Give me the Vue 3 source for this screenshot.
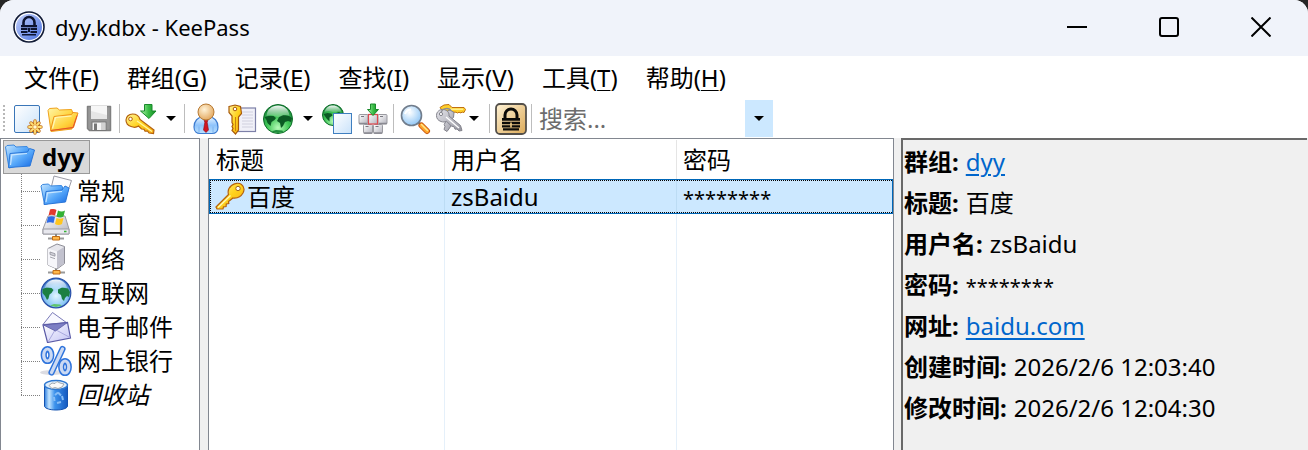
<template>
    <div class="window">
        <svg class="sprites" aria-hidden="true">
            <defs>
                <linearGradient id="g-folder" x1="0" y1="0" x2="1" y2="1">
                    <stop offset="0" stop-color="#c6e6ff" />
                    <stop offset="0.5" stop-color="#58a9fa" />
                    <stop offset="1" stop-color="#1266e2" />
                </linearGradient>
                <linearGradient id="g-gold" x1="0" y1="0" x2="1" y2="1">
                    <stop offset="0" stop-color="#fff39a" />
                    <stop offset="0.5" stop-color="#ffd21c" />
                    <stop offset="1" stop-color="#f7a812" />
                </linearGradient>
                <linearGradient id="g-open" x1="0" y1="0" x2="1" y2="1">
                    <stop offset="0" stop-color="#fff6a8" />
                    <stop offset="0.6" stop-color="#ffd23a" />
                    <stop offset="1" stop-color="#ff9a1c" />
                </linearGradient>
                <linearGradient id="g-paper" x1="0" y1="0" x2="1" y2="1">
                    <stop offset="0" stop-color="#ffffff" />
                    <stop offset="1" stop-color="#c9e2fa" />
                </linearGradient>
                <linearGradient id="g-gray" x1="0" y1="0" x2="1" y2="1">
                    <stop offset="0" stop-color="#ffffff" />
                    <stop offset="1" stop-color="#b3b3bd" />
                </linearGradient>
                <linearGradient id="g-steel" x1="0" y1="0" x2="1" y2="1">
                    <stop offset="0" stop-color="#e4e4ea" />
                    <stop offset="1" stop-color="#94949e" />
                </linearGradient>
                <linearGradient id="g-arrow" x1="0" y1="0" x2="1" y2="0">
                    <stop offset="0" stop-color="#b5f5b0" />
                    <stop offset="0.5" stop-color="#3cbf48" />
                    <stop offset="1" stop-color="#128a22" />
                </linearGradient>
                <radialGradient id="g-green" cx="0.5" cy="0.8" r="0.75">
                    <stop offset="0" stop-color="#b6fbb8" />
                    <stop offset="0.5" stop-color="#3fc656" />
                    <stop offset="1" stop-color="#128436" />
                </radialGradient>
                <radialGradient id="g-ocean" cx="0.5" cy="0.6" r="0.6">
                    <stop offset="0" stop-color="#e2f6ff" />
                    <stop offset="0.6" stop-color="#8cc8f5" />
                    <stop offset="1" stop-color="#3a72c4" />
                </radialGradient>
                <linearGradient id="g-shine" x1="0" y1="0" x2="0" y2="1">
                    <stop offset="0" stop-color="#ffffff" stop-opacity="0.95" />
                    <stop offset="1" stop-color="#ffffff" stop-opacity="0.15" />
                </linearGradient>
                <radialGradient id="g-skin" cx="0.4" cy="0.35" r="0.7">
                    <stop offset="0" stop-color="#fff3d8" />
                    <stop offset="1" stop-color="#e2a55a" />
                </radialGradient>
                <linearGradient id="g-shirt" x1="0" y1="0" x2="0" y2="1">
                    <stop offset="0" stop-color="#e6f3ff" />
                    <stop offset="0.5" stop-color="#8fc3fb" />
                    <stop offset="1" stop-color="#b9e0ff" />
                </linearGradient>
                <radialGradient id="g-lens" cx="0.4" cy="0.35" r="0.7">
                    <stop offset="0" stop-color="#ffffff" />
                    <stop offset="1" stop-color="#8cc4f5" />
                </radialGradient>
                <linearGradient id="g-tan" x1="0" y1="0" x2="1" y2="1">
                    <stop offset="0" stop-color="#fff3d6" />
                    <stop offset="1" stop-color="#dcaa58" />
                </linearGradient>
                <linearGradient id="g-logo" x1="0" y1="0" x2="1" y2="1">
                    <stop offset="0" stop-color="#c3d0fb" />
                    <stop offset="1" stop-color="#4a72e0" />
                </linearGradient>
                <linearGradient id="g-bin" x1="0" y1="0" x2="1" y2="0">
                    <stop offset="0" stop-color="#2d7ede" />
                    <stop offset="0.2" stop-color="#c4e5ff" />
                    <stop offset="0.45" stop-color="#3c92ec" />
                    <stop offset="1" stop-color="#1459c0" />
                </linearGradient>
                <linearGradient id="g-mail" x1="0" y1="0" x2="1" y2="1">
                    <stop offset="0" stop-color="#ffffff" />
                    <stop offset="1" stop-color="#c3c3f5" />
                </linearGradient>
            </defs>

            <symbol id="i-logo" viewBox="0 0 32 32">
                <circle cx="16" cy="16" r="15" fill="#fff" stroke="#111a35" stroke-width="1.6" />
                <circle cx="16" cy="16" r="13" fill="url(#g-logo)" />
                <path d="M10.5 14v-2.500a5.500 5.500 0 0 1 11 0V14" fill="none" stroke="#0d1430" stroke-width="2.600" />
                <path d="M8 14h16v2.200H8zM8 17h6.500v2H8zM17.500 17H24v2h-6.500zM8 20h6.500v2H8zM17.500 20H24v2h-6.500zM9 23h14v1.500H9z" fill="#0d1430" />
                <path d="M15 17h2v4h-2z" fill="#0d1430" />
            </symbol>
            <symbol id="i-new" viewBox="0 0 32 32">
                <rect x="3.500" y="2.500" width="25" height="27" rx="1.500" fill="url(#g-paper)" stroke="#3a76b8" />
                <g stroke="#c26d14" stroke-width="3.400" stroke-linecap="round">
                    <path d="M24 18v12M18 24h12M20 20l8 8M28 20l-8 8" />
                </g>
                <g stroke="#ffe27a" stroke-width="1.800" stroke-linecap="round">
                    <path d="M24 18v12M18 24h12M20 20l8 8M28 20l-8 8" />
                </g>
                <circle cx="24" cy="24" r="2.200" fill="#fff8cf" stroke="#d98a26" stroke-width="0.800" />
            </symbol>
            <symbol id="i-open" viewBox="0 0 32 32">
                <path d="M1 7.500l1.500-2 7.500-.5 2.500 2 12-.5 1 2.500-.5 17-21 2.500z" fill="url(#g-open)" stroke="#f0a21c" />
                <path d="M3.500 27.500L7 13.500l17.500-2 1.500-2 5 .5-4.500 14.500z" fill="url(#g-open)" stroke="#f0941a" />
                <path d="M5.500 25.500l3-11 16-1.500" fill="none" stroke="#fff6b8" stroke-width="1.200" />
                <path d="M4 27.500l22-3 4-12" fill="none" stroke="#e4512a" stroke-width="1" />
            </symbol>
            <symbol id="i-save" viewBox="0 0 32 32">
                <path d="M4.500 3.500h23v24H6.500l-2-2z" fill="#969696" stroke="#808080" stroke-width="1.500" stroke-linejoin="round" />
                <rect x="8" y="3" width="16" height="13" fill="#e6e6e6" />
                <path d="M8 8l16 4V3H8z" fill="#f6f6f6" />
                <rect x="9" y="19" width="14" height="8.500" fill="#f5f5f5" stroke="#777" />
                <rect x="11" y="20.500" width="3" height="7" fill="#777" />
                <rect x="18" y="20" width="4" height="7" fill="#d2d2d2" />
            </symbol>
            <symbol id="i-key-add" viewBox="0 0 32 32">
                <path d="M1 17c0-3.500 3-6 6.500-6 4 0 6.500 2 7.500 5.500l14 10.500-.5 3.500-4.500-.5-1.500-2-2.500.2-1-2-2.500-.2-3-3c-2 1.500-5 1.500-7.500.5C3 22.500 1 20 1 17z" fill="url(#g-gold)" stroke="#b5620e" stroke-width="1.200" />
                <circle cx="5.500" cy="16" r="1.800" fill="#fff" stroke="#b5620e" />
                <path d="M12 18l15 10.500" stroke="#fff6a0" stroke-width="1.400" />
                <path d="M19.500 1.500h7.500v6.500h4L24 15.500 15.500 8h4z" fill="url(#g-arrow)" stroke="#1a8a2c" />
            </symbol>
            <symbol id="i-user" viewBox="0 0 32 32">
                <path d="M4 24c0-6 4-10 8.500-10h7c4.500 0 8.500 4 8.500 10 0 5-3 6.500-6 6.500H10c-3 0-6-1.500-6-6.500z" fill="url(#g-shirt)" stroke="#3c7bd0" stroke-width="1.200" />
                <path d="M9 29.500v-6M23 29.500v-6" stroke="#7db2ee" stroke-width="1" />
                <path d="M11 15l5 4.500 5-4.500" fill="#fff" stroke="#a9c8ee" />
                <path d="M14 16.500h4l-.8 3 1.300 7.500-2.500 2.500-2.500-2.500 1.300-7.500z" fill="#d21420" stroke="#8a0b12" stroke-width="0.600" />
                <circle cx="16" cy="9" r="8" fill="url(#g-skin)" stroke="#b77932" />
            </symbol>
            <symbol id="i-key-note" viewBox="0 0 32 32">
                <rect x="11.500" y="5" width="18" height="23.500" fill="#f0f0f8" stroke="#7d80a8" stroke-width="1.200" />
                <path d="M16 9h11M16 12h11M16 15h11M16 18h11M16 21h11M16 24h11" stroke="#d0d0de" />
                <path d="M3 3.500l6-1.500 5.500 1.500 1 7-3 3.500v13l-3 4-3.500-3.500 1-2-1-2 1-2-1-2V13L3 9.500z" fill="url(#g-gold)" stroke="#a85a0a" stroke-width="1.200" />
                <path d="M9.500 14v14" stroke="#c9820c" stroke-width="1" />
                <circle cx="9" cy="6" r="1.800" fill="#fff" stroke="#a85a0a" />
            </symbol>
            <symbol id="i-globe-green" viewBox="0 0 32 32">
                <circle cx="16" cy="16" r="14.500" fill="url(#g-green)" stroke="#0d6b28" />
                <path d="M2.500 14l4-1 5 0 2.500 2-1.500 2-3 2-1 4-3-3-1-3zM17 14l4-2 6 1 3 2-1 4-3-1-3 1-2 4-2 2-1-5-3-2z" fill="#0b5a24" />
                <path d="M9 28.500l5-1.500 6 .5 2 1-6 1.500z" fill="#1f8c3c" />
                <path d="M4.500 13C5 6 10 2.500 16 2.500S27 6 27.500 13c-6-3-9 2-12 1s-6-3-11-1z" fill="url(#g-shine)" />
            </symbol>
            <symbol id="i-globe-page" viewBox="0 0 32 32">
                <circle cx="12" cy="12" r="10.500" fill="url(#g-green)" stroke="#0d6b28" />
                <path d="M2.500 11l4-1 4 .5 1 2-3 2v4l-3-3zM13 11l5-2 4 3v5l-5 4-2-4z" fill="#0b5a24" />
                <path d="M3.500 9C5 4 8 2.500 12 2.500S19.500 5 20.500 9c-5-1-6 1-9 0s-5-1-8 0z" fill="url(#g-shine)" />
                <rect x="12.500" y="10.500" width="18" height="20" fill="url(#g-paper)" stroke="#3f7fc0" />
            </symbol>
            <symbol id="i-keyboard" viewBox="0 0 32 32">
                <g fill="url(#g-gray)" stroke="#9a9aa0">
                    <rect x="2" y="11.500" width="9" height="9.500" rx="1" />
                    <rect x="21" y="11.500" width="9" height="9.500" rx="1" />
                    <rect x="6.500" y="21.500" width="9" height="9" rx="1" />
                    <rect x="16.500" y="21.500" width="9" height="9" rx="1" />
                    <rect x="11.500" y="11.500" width="9" height="9.500" stroke="#e0484e" stroke-width="1.200" />
                </g>
                <path d="M4 13.500h3M23 13.500h3M8.500 23.500h3M18.500 23.500h3" stroke="#77777f" />
                <path d="M2 20.500h8M22 20.500h8M7 30h8M17 30h8" stroke="#8a8a92" stroke-width="1.500" />
                <path d="M13.500 1h5v5.500h3L16 12.500 10.500 6.500h3z" fill="url(#g-arrow)" stroke="#1a8a2c" />
            </symbol>
            <symbol id="i-search" viewBox="0 0 32 32">
                <path d="M19 19l3 3" stroke="#777" stroke-width="2.500" />
                <path d="M22.500 22.500l5.500 5.500" stroke="#c4520e" stroke-width="6" stroke-linecap="round" />
                <path d="M22.500 22.500l5.500 5.500" stroke="#ffa42a" stroke-width="4.200" stroke-linecap="round" />
                <path d="M22.500 21.500l6 6" stroke="#ffe88a" stroke-width="1.500" stroke-linecap="round" />
                <circle cx="12.500" cy="12.500" r="10" fill="url(#g-lens)" stroke="#717d8c" stroke-width="1.600" />
                <path d="M6 11c1-3 3-4.500 6-4.500" fill="none" stroke="#fff" stroke-width="2" />
            </symbol>
            <symbol id="i-keys" viewBox="0 0 32 32">
                <path d="M5 4.500l4-2.500 5-.5 3 3h12l1.500 2-1.500 3-2-.5-1 1-2-.8-1.500.8-1.500-.8H14l-5 .8z" fill="#ffd02a" stroke="#c0700e" />
                <path d="M15 6.200h13" stroke="#fff6a0" stroke-width="1.200" />
                <path d="M10 9l5-2 4 2.500-.5 5-2.500 2-.5 3.500.5 3-4 5.500-3-2 1-3-.8-2 1.300-2.500z" fill="url(#g-steel)" stroke="#83838c" />
                <path d="M1.500 12.500c0-4 3.500-6.500 7-6 4 .5 6 3.500 5.500 6.500l11.500 9.500 1.500 5-3 .5-2-2-2 .2-1-2.500-2.500-.5-5-5c-1.500 1-3.500 1-5.500.3-3-1-4.500-3-4.500-6z" fill="url(#g-steel)" stroke="#83838c" />
                <path d="M11 14l13 11" stroke="#fff" stroke-width="1.300" />
                <circle cx="6" cy="11" r="1.600" fill="#fff" stroke="#83838c" />
                <path d="M6 10c1-5 8-6 10-2" fill="none" stroke="#8d8d94" stroke-width="1.400" />
            </symbol>
            <symbol id="i-lock" viewBox="0 0 32 32">
                <rect x="1" y="1" width="30" height="30" rx="4" fill="url(#g-tan)" stroke="#54504a" stroke-width="1.800" />
                <path d="M10 15.500V12a6 6 0 0 1 12 0v3.500" fill="none" stroke="#0c0b08" stroke-width="3" />
                <path d="M7 15h18v2.800H7zM7 18.800h18v2.400H7zM7 22.200h18v2.200H7zM8 25.200h16v2.300H8z" fill="#0c0b08" />
                <path d="M15.200 19.500h1.600v5h-1.600z" fill="#f3cf86" />
            </symbol>
            <symbol id="i-folder" viewBox="0 0 32 32">
                <path d="M1.500 6l1.500-1.500 7-.5 2 2 11-.5 1.500 2V22L5 27z" fill="url(#g-folder)" stroke="#3a88e0" />
                <path d="M4.500 26.500L6 12.500l17.500-1.500 2-3.500 5 1.500-4.500 16z" fill="url(#g-folder)" stroke="#2a76d8" />
                <path d="M6.500 24L7.800 13.800 23 12.500" fill="none" stroke="#c8e6ff" stroke-width="1.200" />
            </symbol>
            <symbol id="i-folder-doc" viewBox="0 0 32 32">
                <path d="M14 1l17.500 4.500-6 18-16-4z" fill="#fbfbfd" stroke="#9a9aa4" />
                <path d="M1 11l1.500-1.500 6-.5 2 2 11-.5 1 1.500v13L4.500 29.500z" fill="url(#g-folder)" stroke="#3a88e0" />
                <path d="M4 29.500l2-13 16-1.500 3-4 4 2-3.500 14z" fill="url(#g-folder)" stroke="#2a76d8" />
                <path d="M6 27l1.500-9.200 14.500-1.300" fill="none" stroke="#c8e6ff" stroke-width="1.200" />
            </symbol>
            <symbol id="i-window" viewBox="0 0 32 32">
                <path d="M8 7h17l4 13v5H3v-5z" fill="url(#g-gray)" stroke="#9a9aa2" />
                <path d="M3 20h26v5H3z" fill="#e8e8ee" stroke="#9a9aa2" />
                <path d="M16 25v3" stroke="#888" stroke-width="2" />
                <path d="M8 29.500h16" stroke="#999" stroke-width="2" />
                <path d="M12.500 27.500h7v3.500h-7z" fill="#ffb84a" stroke="#c26d14" />
                <path d="M10 .5c2-1 4.500-.5 6.500.5L15 6.500c-2.500-1-4.500-1-6.500 0z" fill="#e23a2e" />
                <path d="M18 1.500c2 1 4.500 1.500 7 0L23.500 7.500c-2.500 1.500-5 1-7 0z" fill="#35b135" />
                <path d="M8 8c2.500-1 5-1 7 0l-1.500 6c-2.500-1-4.500-1-7 0z" fill="#2f6be6" />
                <path d="M16.500 9c2 1 4.500 1 7 0L22 15c-2.500 1.500-5 1-7 0z" fill="#ffc51e" />
                <path d="M24 22.500h2.500" stroke="#35b135" stroke-width="1.500" />
            </symbol>
            <symbol id="i-server" viewBox="0 0 32 32">
                <path d="M8 5.500L17 1l7.500 2.500v17L17 26l-9-4z" fill="#e6e6ec" stroke="#8d8d96" />
                <path d="M8 5.500l9 3V26l-9-4z" fill="#f6f6fa" />
                <path d="M17 8.500l7-4.500v16.500L17 25.500z" fill="#c2c2ce" />
                <path d="M10 9l5 1.700v2.500l-5-1.700zM10 14l5 1.700" fill="#d2d2da" stroke="#90909a" stroke-width="0.800" />
                <path d="M16 25.500V28" stroke="#888" stroke-width="2" />
                <path d="M8 29.500h17" stroke="#999" stroke-width="2" />
                <path d="M13 27.500h7v3.500h-7z" fill="#ffb84a" stroke="#c26d14" />
            </symbol>
            <symbol id="i-globe" viewBox="0 0 32 32">
                <circle cx="16" cy="16" r="14.800" fill="url(#g-ocean)" stroke="#274fa8" stroke-width="1.200" />
                <path d="M2.500 12l4-1.500 5 .5 2 2-2 3-2 1.500-1 4-1.500 1.500-2-4-2.500-3zM18 12.500l4-2 6 1 2 3.500-1 5-2-1-2 2-1 3-2-2-1-4-3-2z" fill="#1b7f42" />
                <path d="M10 28.500l4-1.500 6 .5 2 1-6 1.500z" fill="#5fc46c" />
                <path d="M5 11C6 5.500 10.500 2.500 16 2.500S26 5.500 27 11c-5-2-8 1.500-11 1s-6-2.500-11-1z" fill="url(#g-shine)" />
            </symbol>
            <symbol id="i-mail" viewBox="0 0 32 32">
                <path d="M3 13.500L12.500 1.500 27 12z" fill="#f8f8ff" stroke="#7a7ab8" />
                <path d="M3 14l24.500-2.500L30.500 27 7.500 31.500z" fill="url(#g-mail)" stroke="#5a5aa6" stroke-width="1.200" />
                <path d="M3.500 14l12 6 11.500-8.200z" fill="#7c7ec4" stroke="#5a5aa6" stroke-width="0.800" />
                <path d="M8 31l6.500-11M30 26.500L17 19.500" fill="none" stroke="#a9a9de" />
            </symbol>
            <symbol id="i-percent" viewBox="0 0 32 32">
                <ellipse cx="12" cy="27.500" rx="12" ry="2.500" fill="#dcdce2" />
                <g fill="none" stroke-linecap="round">
                    <g stroke="#2f74dc" stroke-width="6.200">
                        <path d="M22.500 4L11.500 27.500" />
                        <ellipse cx="7.500" cy="10" rx="3.800" ry="6" />
                        <ellipse cx="25" cy="22" rx="3.800" ry="6" />
                    </g>
                    <g stroke="#ccdaf3" stroke-width="3.200">
                        <path d="M22.500 4L11.500 27.500" />
                        <ellipse cx="7.500" cy="10" rx="3.800" ry="6" />
                        <ellipse cx="25" cy="22" rx="3.800" ry="6" />
                    </g>
                </g>
            </symbol>
            <symbol id="i-bin" viewBox="0 0 32 32">
                <path d="M4.500 5.500v22c1 2 5.500 3.500 11.500 3.500s10.500-1.500 11.500-3.500v-22z" fill="url(#g-bin)" stroke="#1553b0" />
                <ellipse cx="16" cy="6" rx="11.500" ry="4.500" fill="#dfeefc" stroke="#2f78d0" stroke-width="1.400" />
                <path d="M9 6.500l3-2.500 3 .5L17 2.500l3 1.500 4 1-2 3-4 1.500-3-1-3 1z" fill="#fafafa" stroke="#8d949c" stroke-width="0.800" />
                <path d="M18 13.500l3 3M22 17l1 4M21 23l-4 1M14.500 22l-.5-4M15 16l3-2.500" stroke="#86bdf6" stroke-width="2" />
            </symbol>
            <symbol id="i-key" viewBox="0 0 32 32">
                <path d="M2 26L14.500 13.500c-1-3.500 0-6.500 3-9C20.500 2 25 1.500 27.500 3.500c2.500 2 3 5.500 1.500 8.500-2 3.500-6 5.500-10 5l-4.500 3.500.3 2-2.500.5-.2 2.500-2.600.3-.5 2.200H3z" fill="url(#g-gold)" stroke="#b5620e" stroke-width="1.200" />
                <path d="M4 26.500l12.500-12" stroke="#fff9b8" stroke-width="1.400" />
                <circle cx="24" cy="7.500" r="2.200" fill="#fff" stroke="#a0641e" />
            </symbol>
        </svg>

        <header class="titlebar">
            <svg class="logo" aria-hidden="true"><use href="#i-logo" /></svg>
            <h1>dyy.kdbx - KeePass</h1>
            <div class="window-buttons">
                <button type="button" aria-label="最小化">
                    <svg width="20" height="20" viewBox="0 0 20 20"><path d="M0 10h20" /></svg>
                </button>
                <button type="button" aria-label="最大化">
                    <svg width="20" height="20" viewBox="0 0 20 20"><rect x="1" y="1" width="18" height="18" rx="2" /></svg>
                </button>
                <button type="button" aria-label="关闭">
                    <svg width="20" height="20" viewBox="0 0 20 20"><path d="M0.500 0.500l19 19M19.500 0.500l-19 19" /></svg>
                </button>
            </div>
        </header>

        <nav class="menubar">
            <button v-for="item in menus" :key="item.key" type="button">
                {{ item.label }}(<u>{{ item.key }}</u>)
            </button>
        </nav>

        <div class="toolbar">
            <span class="grip"></span>
            <template v-for="(tool, index) in tools" :key="index">
                <span v-if="tool.separator" class="separator"></span>
                <button v-else-if="tool.drop" type="button" class="drop" :class="tool.drop" :aria-label="tool.label">
                    <svg width="10" height="5" viewBox="0 0 10 5"><path d="M0 0h10L5 5z" /></svg>
                </button>
                <button v-else type="button" class="tool" :aria-label="tool.label">
                    <svg width="32" height="32"><use :href="`#i-${tool.icon}`" /></svg>
                </button>
            </template>
            <input v-model="search" type="text" class="search" placeholder="搜索..." aria-label="搜索" />
            <button type="button" class="search-drop" aria-label="搜索历史">
                <svg width="10" height="5" viewBox="0 0 10 5"><path d="M0 0h10L5 5z" /></svg>
            </button>
        </div>

        <main class="panes">
            <aside class="tree">
                <button type="button" class="root">
                    <svg width="32" height="32"><use href="#i-folder" /></svg>
                    <span>dyy</span>
                </button>
                <ul>
                    <li v-for="group in groups" :key="group.name">
                        <button type="button" :class="{ recycled: group.recycled }">
                            <svg width="32" height="32"><use :href="`#i-${group.icon}`" /></svg>
                            <span>{{ group.name }}</span>
                        </button>
                    </li>
                </ul>
            </aside>

            <section class="entries">
                <table>
                    <colgroup>
                        <col class="col-title" />
                        <col class="col-user" />
                        <col />
                    </colgroup>
                    <thead>
                        <tr>
                            <th>标题</th>
                            <th>用户名</th>
                            <th>密码</th>
                        </tr>
                    </thead>
                    <tbody>
                        <tr v-for="entry in entries" :key="entry.title" class="selected">
                            <td>
                                <div class="entry-title">
                                    <svg width="32" height="32"><use href="#i-key" /></svg>
                                    <span>{{ entry.title }}</span>
                                </div>
                            </td>
                            <td>{{ entry.user }}</td>
                            <td><span class="mask">{{ entry.password }}</span></td>
                        </tr>
                        <tr class="filler" aria-hidden="true">
                            <td></td>
                            <td></td>
                            <td></td>
                        </tr>
                    </tbody>
                </table>
            </section>

            <section class="details">
                <p v-for="row in details" :key="row.label">
                    <b>{{ row.label }}:</b>
                    <a v-if="row.href" :href="row.href">{{ row.value }}</a>
                    <span v-else :class="{ mask: row.masked }">{{ row.value }}</span>
                </p>
            </section>
        </main>
    </div>
</template>

<script setup>
import { ref } from 'vue';

const search = ref('');

const menus = [
    { label: '文件', key: 'F' },
    { label: '群组', key: 'G' },
    { label: '记录', key: 'E' },
    { label: '查找', key: 'I' },
    { label: '显示', key: 'V' },
    { label: '工具', key: 'T' },
    { label: '帮助', key: 'H' }
];

const tools = [
    { icon: 'new', label: '新建' },
    { icon: 'open', label: '打开' },
    { icon: 'save', label: '保存' },
    { separator: true },
    { icon: 'key-add', label: '添加记录' },
    { drop: 'wide', label: '添加记录选项' },
    { separator: true },
    { icon: 'user', label: '复制用户名' },
    { icon: 'key-note', label: '复制密码' },
    { icon: 'globe-green', label: '打开网址' },
    { drop: 'wide', label: '打开网址选项' },
    { icon: 'globe-page', label: '复制网址' },
    { icon: 'keyboard', label: '自动输入' },
    { separator: true },
    { icon: 'search', label: '查找' },
    { icon: 'keys', label: '显示记录' },
    { drop: 'narrow', label: '显示记录选项' },
    { separator: true },
    { icon: 'lock', label: '锁定' },
    { separator: true }
];

const groups = [
    { name: '常规', icon: 'folder-doc' },
    { name: '窗口', icon: 'window' },
    { name: '网络', icon: 'server' },
    { name: '互联网', icon: 'globe' },
    { name: '电子邮件', icon: 'mail' },
    { name: '网上银行', icon: 'percent' },
    { name: '回收站', icon: 'bin', recycled: true }
];

const entries = [{ title: '百度', user: 'zsBaidu', password: '********' }];

const details = [
    { label: '群组', value: 'dyy', href: '#dyy' },
    { label: '标题', value: '百度' },
    { label: '用户名', value: 'zsBaidu' },
    { label: '密码', value: '********', masked: true },
    { label: '网址', value: 'baidu.com', href: 'https://baidu.com' },
    { label: '创建时间', value: '2026/2/6 12:03:40' },
    { label: '修改时间', value: '2026/2/6 12:04:30' }
];
</script>

<style>
body {
    background: #262626;
}
</style>

<style scoped>
.window {
    display: flex;
    flex-direction: column;
    height: 100vh;
    overflow: hidden;
    border-radius: 14px 14px 0 0;
    background: #fff;
    color: #000;
    font-family: 'Noto Sans', 'Noto Sans CJK SC', sans-serif;
    font-size: 24px;
    line-height: 34px;
}

.sprites {
    position: absolute;
    width: 0;
    height: 0;
}

button {
    padding: 0;
    border: 0;
    background: none;
    color: inherit;
    font: inherit;
}

svg {
    display: block;
    flex: none;
}

.titlebar {
    display: flex;
    align-items: center;
    flex: none;
    box-sizing: border-box;
    height: 56px;
    padding: 0 1px 2px 13px;
    background: #f0f3fa;
}

.logo {
    width: 32px;
    height: 32px;
}

h1 {
    flex: 1;
    margin: 0 0 0 10px;
    font-size: 22px;
    font-weight: 400;
}

.window-buttons {
    display: flex;
}

.window-buttons button {
    display: flex;
    align-items: center;
    justify-content: center;
    width: 92px;
    height: 54px;
}

.window-buttons svg {
    fill: none;
    stroke: #000;
    stroke-width: 2;
}

.menubar {
    display: flex;
    flex: none;
    height: 44px;
    padding-left: 10px;
}

.menubar button {
    padding: 0 14px;
    white-space: nowrap;
}

.menubar u {
    text-decoration-thickness: 1px;
    text-underline-offset: 3px;
}

.toolbar {
    display: flex;
    align-items: center;
    flex: none;
    height: 37px;
    margin-bottom: 1px;
    padding-left: 3px;
}

.grip {
    width: 2px;
    height: 28px;
    margin-right: 4px;
    background: repeating-linear-gradient(#b8b8b8 0 2px, #fff 2px 4px);
}

.tool {
    display: flex;
    justify-content: center;
    width: 36px;
}

.drop {
    display: flex;
    justify-content: center;
}

.wide {
    width: 23px;
}

.narrow {
    justify-content: flex-start;
    width: 18px;
}

.separator {
    width: 1px;
    height: 29px;
    margin: 0 3px 0 2px;
    background: #bdbdbd;
}

.search {
    width: 206px;
    margin-left: 4px;
    padding: 0;
    border: 0;
    outline: 0;
    background: none;
    color: #000;
    font: inherit;
}

.search::placeholder {
    color: #6d6d6d;
    opacity: 1;
}

.search-drop {
    display: flex;
    align-items: center;
    justify-content: center;
    width: 28px;
    height: 37px;
    background: #cce8ff;
}

.panes {
    display: flex;
    flex: 1;
    min-height: 0;
    background: #f0f0f0;
}

.tree {
    flex: none;
    box-sizing: border-box;
    width: 200px;
    padding: 1px 2px;
    border: 1px solid #828790;
    border-bottom: 0;
    background: #fff;
}

.tree button {
    display: flex;
    align-items: center;
    height: 34px;
    white-space: nowrap;
}

.tree .root {
    gap: 6px;
    box-sizing: border-box;
    padding-right: 4px;
    border: 1px solid #999;
    background: #d9d9d9;
    font-weight: 700;
}

.tree ul {
    margin: 0;
    padding: 0 0 0 18px;
    list-style: none;
}

.tree li {
    display: flex;
    background:
        repeating-linear-gradient(#808080 0 1px, transparent 1px 2px) 0 0 / 1px 100% no-repeat,
        repeating-linear-gradient(90deg, #808080 0 1px, transparent 1px 2px) 0 17px / 19px 1px no-repeat;
    padding-left: 19px;
}

.tree li:last-child {
    background-size: 1px 17px, 19px 1px;
}

.tree li button {
    gap: 5px;
}

.recycled {
    font-style: italic;
}

.entries {
    flex: 1;
    min-width: 0;
    margin: 0 7px 0 8px;
    padding: 1px 1px 0;
    border: 1px solid #828790;
    border-bottom: 0;
    background: #fff;
}

table {
    width: 100%;
    height: 100%;
    table-layout: fixed;
    border-spacing: 0;
}

.col-title {
    width: 235px;
}

.col-user {
    width: 232px;
}

th,
td {
    padding: 0 6px;
    border-right: 1px solid #e5f0fa;
    text-align: left;
    font-weight: 400;
    white-space: nowrap;
}

th:last-child,
td:last-child {
    border-right: 0;
}

th {
    height: 40px;
    border-right-color: #e5e5e5;
}

.selected td {
    height: 31px;
    border-top: 1px dotted #000;
    border-bottom: 1px dotted #000;
    border-right-color: #bcdcf4;
    background: #cce8ff;
    line-height: 31px;
}

.selected td:first-child {
    padding-left: 5px;
    border-left: 1px dotted #000;
}

.selected {
    outline: 1px solid #0067b8;
}

.filler td {
    height: auto;
}

.entry-title {
    display: flex;
    align-items: center;
    gap: 1px;
    height: 31px;
}

.entry-title svg {
    margin-left: -2px;
}

.mask {
    font-size: 20px;
    line-height: 24px;
}

.details {
    flex: none;
    box-sizing: border-box;
    width: 406px;
    margin-right: 1px;
    padding: 1px;
    border-top: 2px solid #696969;
    border-left: 2px solid #696969;
    background: #f0f0f0;
}

.details p {
    height: 41px;
    margin: 0;
    line-height: 41px;
    white-space: nowrap;
}

.details b {
    margin-right: 7px;
}

.details a {
    color: #0066cc;
    text-decoration-thickness: 2px;
    text-underline-offset: 3px;
}
</style>
